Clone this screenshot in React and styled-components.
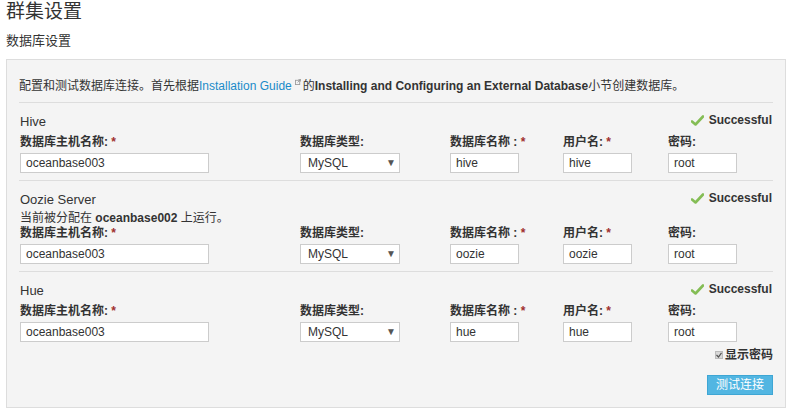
import React from "react";
import styled, { createGlobalStyle } from "styled-components";

const Global = createGlobalStyle`
  html, body { margin: 0; padding: 0; background: #fff; }
  body {
    font-family: "Liberation Sans", Arial, "Noto Sans CJK SC", sans-serif;
    color: #333;
    font-size: 12px;
  }
  * { box-sizing: border-box; }
`;

const Page = styled.div`
  padding: 0 0 0 6px;
  width: 788px;
`;

const Title = styled.h1`
  margin: 0;
  font-size: 19px;
  font-weight: normal;
  line-height: 24px;
  color: #333;
`;

const SubTitle = styled.h2`
  margin: 7px 0 0;
  font-size: 13px;
  font-weight: normal;
  line-height: 20px;
  height: 28px;
  color: #333;
`;

const Panel = styled.div`
  width: 780px;
  background: #f4f4f4;
  border: 1px solid #ddd;
  padding: 0 12px 12px;
`;

const Intro = styled.div`
  padding: 18px 0 8px;
  line-height: 16px;
  border-bottom: 1px solid #ddd;
`;

const Link = styled.a`
  color: #1a8bc9;
  text-decoration: none;
`;

const ExtIcon = styled.svg`
  width: 6px;
  height: 6px;
  margin: 0 2px 0 3px;
  vertical-align: 5px;
`;

const Section = styled.div`
  padding: 9px 0 ${(p) => (p.$last ? "0" : "7px")};
  border-bottom: ${(p) => (p.$last ? "none" : "1px solid #ddd")};
`;

const TitleRow = styled.div`
  display: flex;
  justify-content: space-between;
  align-items: flex-start;
  height: 20px;
`;

const ServiceName = styled.div`
  font-size: 13px;
  line-height: 20px;
  padding-left: 1px;
`;

const Status = styled.div`
  display: flex;
  align-items: center;
  gap: 5px;
  font-weight: bold;
  line-height: 14px;
  padding-top: 1px;
  padding-right: 1px;
`;

const Note = styled.div`
  line-height: 16px;
  padding-left: 1px;
  margin-bottom: -1px;
`;

const Fields = styled.div`
  display: grid;
  grid-template-columns: 280px 150px 113px 105px 1fr;
  margin-top: ${(p) => (p.$afterNote ? "0" : "2px")};
`;

const Field = styled.div`
  display: flex;
  flex-direction: column;
  padding-left: 1px;
`;

const Label = styled.label`
  font-weight: bold;
  line-height: 16px;
  height: 16px;
  margin-bottom: 3px;
`;

const Req = styled.span`
  color: #a0302e;
`;

const Input = styled.div`
  width: ${(p) => p.$w}px;
  height: 20px;
  border: 1px solid #ccc;
  background: #fff;
  padding: 0 5px;
  line-height: 18px;
  font-size: 12px;
  color: #333;
`;

const Select = styled.div`
  width: 100px;
  height: 20px;
  border: 1px solid #ccc;
  background: #fff;
  padding: 0 3px 0 7px;
  line-height: 18px;
  display: flex;
  justify-content: space-between;
  align-items: center;
`;

const Caret = styled.span`
  font-size: 10px;
  color: #555;
`;

const Footer = styled.div`
  display: flex;
  flex-direction: column;
  align-items: flex-end;
  margin-top: 5px;
`;

const ShowPwd = styled.div`
  display: flex;
  align-items: center;
  gap: 2px;
  font-weight: bold;
  line-height: 16px;
`;

const Check = styled.span`
  width: 8px;
  height: 8px;
  background: #d8d8d8;
  border: 1px solid #bbb;
  display: inline-flex;
  align-items: center;
  justify-content: center;
`;

const Button = styled.button`
  margin-top: 12px;
  height: 20px;
  padding: 0 8px;
  background: #52b6e2;
  border: 1px solid #3ea6d4;
  color: #fff;
  font-family: inherit;
  font-size: 12px;
  line-height: 18px;
`;

const CheckMark = () => (
  <svg width="13" height="11" viewBox="0 0 13 11">
    <path d="M1 6.5 L4.5 9.5 L12 1.5" stroke="#84bd55" strokeWidth="2.6" fill="none" strokeLinecap="round" strokeLinejoin="round" />
  </svg>
);

const sections = [
  { name: "Hive", db: "hive", user: "hive" },
  { name: "Oozie Server", db: "oozie", user: "oozie", note: true },
  { name: "Hue", db: "hue", user: "hue", last: true },
];

export default function App() {
  return (
    <>
      <Global />
      <Page>
        <Title>群集设置</Title>
        <SubTitle>数据库设置</SubTitle>
        <Panel>
          <Intro>
            配置和测试数据库连接。首先根据<Link href="#">Installation Guide</Link>
            <ExtIcon viewBox="0 0 7 7">
              <rect x="0.5" y="1.5" width="5" height="5" fill="none" stroke="#999" strokeWidth="1" />
              <path d="M3 4 L6.5 0.5 M4 0.5 H6.5 V3" stroke="#999" strokeWidth="1" fill="none" />
            </ExtIcon>
            的<b>Installing and Configuring an External Database</b>小节创建数据库。
          </Intro>
          {sections.map((s) => (
            <Section key={s.name} $last={s.last}>
              <TitleRow>
                <ServiceName>{s.name}</ServiceName>
                <Status>
                  <CheckMark />
                  Successful
                </Status>
              </TitleRow>
              {s.note && (
                <Note>
                  当前被分配在 <b>oceanbase002</b> 上运行。
                </Note>
              )}
              <Fields $afterNote={s.note}>
                <Field>
                  <Label>
                    数据库主机名称: <Req>*</Req>
                  </Label>
                  <Input $w={189}>oceanbase003</Input>
                </Field>
                <Field>
                  <Label>数据库类型:</Label>
                  <Select>
                    MySQL <Caret>▼</Caret>
                  </Select>
                </Field>
                <Field>
                  <Label>
                    数据库名称 : <Req>*</Req>
                  </Label>
                  <Input $w={69}>{s.db}</Input>
                </Field>
                <Field>
                  <Label>
                    用户名: <Req>*</Req>
                  </Label>
                  <Input $w={69}>{s.user}</Input>
                </Field>
                <Field>
                  <Label>密码:</Label>
                  <Input $w={69}>root</Input>
                </Field>
              </Fields>
              {s.last && (
                <Footer>
                  <ShowPwd>
                    <Check>
                      <svg width="6" height="6" viewBox="0 0 6 6">
                        <path d="M0.5 3 L2.5 5 L5.5 0.8" stroke="#555" strokeWidth="1.2" fill="none" />
                      </svg>
                    </Check>
                    显示密码
                  </ShowPwd>
                  <Button>测试连接</Button>
                </Footer>
              )}
            </Section>
          ))}
        </Panel>
      </Page>
    </>
  );
}
